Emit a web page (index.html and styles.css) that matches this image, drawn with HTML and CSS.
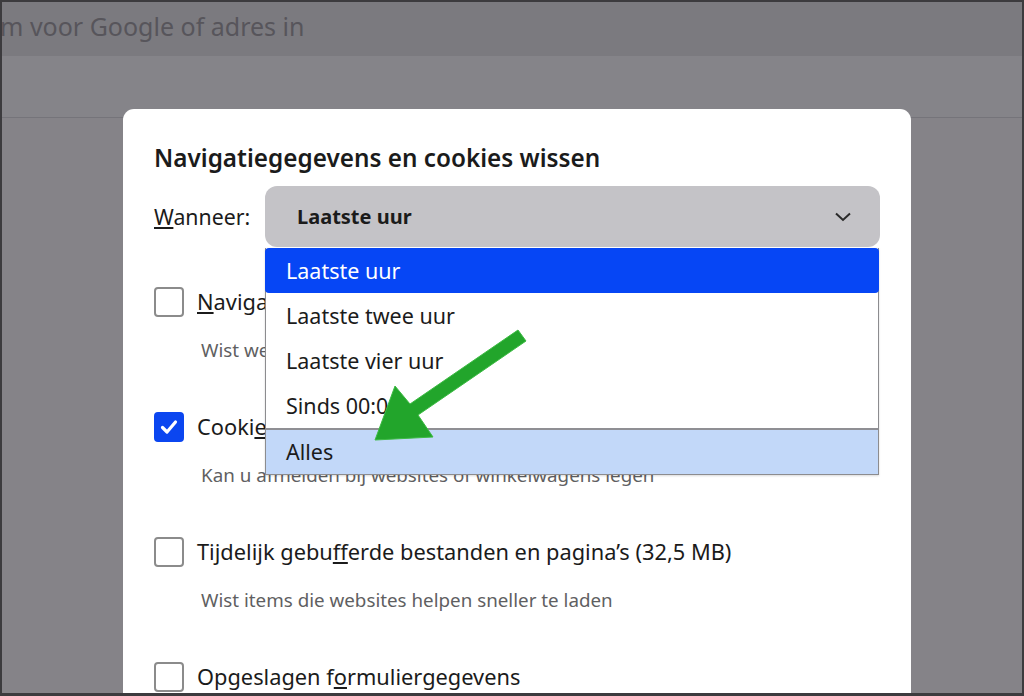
FILE: index.html
```html
<!DOCTYPE html>
<html lang="nl">
<head>
<meta charset="utf-8">
<title>Navigatiegegevens en cookies wissen</title>
<link rel="stylesheet" href="styles.css">
</head>
<body>
<div class="screen">
  <div class="topbar"><span class="omni">m voor Google of adres in</span></div>
  <div class="band"></div>

  <div class="dialog">
    <h2 class="title">Navigatiegegevens en cookies wissen</h2>
    <div class="when">
      <span class="when-label"><u>W</u>anneer:</span>
      <div class="select">
        <span class="select-value">Laatste uur</span>
        <svg class="chev" width="18" height="12" viewBox="0 0 18 12"><path d="M2 2.5 L9 9 L16 2.5" fill="none" stroke="#2a2a2a" stroke-width="2"/></svg>
      </div>
    </div>

    <div class="option">
      <span class="box"></span>
      <span class="label"><u>N</u>avigatiegeschiedenis</span>
      <span class="desc">Wist website-adressen uit de geschiedenis</span>
    </div>
    <div class="option">
      <span class="box checked"><svg width="22" height="22" viewBox="0 0 22 22"><path d="M4.5 11.5 L9 16 L17.5 6" fill="none" stroke="#fff" stroke-width="3.2" stroke-linecap="round" stroke-linejoin="round"/></svg></span>
      <span class="label">Cooki<u>e</u>s en andere sitegegevens</span>
      <span class="desc">Kan u afmelden bij websites of winkelwagens legen</span>
    </div>
    <div class="option">
      <span class="box"></span>
      <span class="label">Tijdelijk gebu<u>f</u>ferde bestanden en pagina’s (32,5 MB)</span>
      <span class="desc">Wist items die websites helpen sneller te laden</span>
    </div>
    <div class="option">
      <span class="box"></span>
      <span class="label">Opgeslagen f<u>o</u>rmuliergegevens</span>
    </div>

    <ul class="dropdown">
      <li class="item selected">Laatste uur</li>
      <li class="item">Laatste twee uur</li>
      <li class="item">Laatste vier uur</li>
      <li class="item">Sinds 00:00</li>
      <li class="item hover">Alles</li>
    </ul>
  </div>

  <svg class="arrow" width="1024" height="696" viewBox="0 0 1024 696">
    <path d="M518 330 L526 341 L418 415 L433 437 L375 440 L395 386 L410 404 Z" fill="#22a52b" stroke="#3dbb44" stroke-width="1" stroke-linejoin="miter"/>
  </svg>
</div>
</body>
</html>
```

FILE: styles.css
```css
* { box-sizing: border-box; }
html, body { margin: 0; padding: 0; }
body {
  width: 1024px;
  height: 696px;
  overflow: hidden;
  font-family: "Noto Sans", "Open Sans", sans-serif;
  color: #1b1b1b;
}
.screen {
  position: relative;
  width: 1024px;
  height: 696px;
  overflow: hidden;
  background: #858388;
  border: 2px solid #3c3b3e;
  border-bottom-width: 3px;
}
.topbar {
  height: 54px;
  background: #7b7a7f;
  padding-top: 7px;
  white-space: nowrap;
}
.omni {
  font-size: 25px;
  color: #57555b;
  margin-left: -2px;
}
.band {
  height: 62px;
  background: #858489;
  border-bottom: 1px solid #75747a;
}
.dialog {
  position: absolute;
  left: 121px;
  top: 107px;
  width: 788px;
  height: 620px;
  background: #fff;
  border-radius: 11px;
  padding: 34px 31px 0 31px;
}
.title {
  margin: 0;
  font-size: 24.3px;
  font-weight: 600;
  line-height: 30px;
}
.when {
  display: flex;
  align-items: center;
  margin-top: 13px;
  gap: 14px;
}
.when-label {
  font-size: 21.3px;
  width: 97px;
  white-space: nowrap;
}
.select {
  flex: 0 0 615px;
  height: 61px;
  background: #c4c3c7;
  border-radius: 12px;
  display: flex;
  align-items: center;
  justify-content: space-between;
  padding: 0 28px 0 32px;
}
.select-value {
  font-size: 20px;
  font-weight: 700;
}
.chev { display: block; }
.option {
  display: grid;
  grid-template-columns: 30px 1fr;
  column-gap: 13px;
  align-items: center;
  margin-top: 40px;
}
.option + .option { margin-top: 50px; }
.box {
  width: 30px;
  height: 30px;
  border: 2px solid #8b8b8b;
  border-radius: 4px;
  display: flex;
  align-items: center;
  justify-content: center;
}
.box.checked {
  background: #0b46f0;
  border-color: #0b46f0;
}
.label {
  font-size: 21.8px;
  line-height: 30px;
  white-space: nowrap;
}
.desc {
  grid-column: 2;
  font-size: 18.8px;
  line-height: 24px;
  color: #5f5f62;
  margin-top: 21px;
  padding-left: 4px;
  white-space: nowrap;
}
.dropdown {
  position: absolute;
  left: 142px;
  top: 139px;
  width: 614px;
  margin: 0;
  padding: 0;
  list-style: none;
  background: #fff;
  border: 1px solid #8c8c8f;
  border-top: none;
  box-shadow: 0 1px 2px rgba(0,0,0,0.15);
}
.item {
  height: 45px;
  font-size: 21.5px;
  line-height: 45px;
  padding-left: 20px;
  color: #1b1b1b;
  white-space: nowrap;
}
.item.selected {
  background: #0646f5;
  color: #fff;
  border-radius: 4px;
  margin: 0 -1px;
  padding-left: 21px;
  height: 45px;
}
.item.hover {
  background: #c2d8f9;
  border-top: 2px solid #8f8f94;
  height: 46px;
  line-height: 44px;
}
.arrow {
  position: absolute;
  left: -2px;
  top: -2px;
}
```
